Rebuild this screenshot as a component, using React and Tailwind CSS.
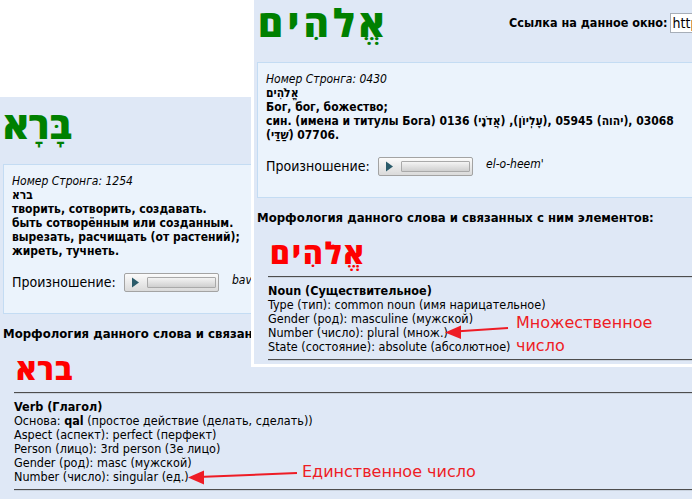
import React from "react";

const sans = { fontFamily: '"DejaVu Sans Condensed", "DejaVu Sans", sans-serif' };
const hebrew = { fontFamily: '"Open Sans", "DejaVu Sans", sans-serif' };

function Player() {
  return (
    <div className="flex items-center w-[95px] h-[19px] border border-[#a3a3a3] rounded-[2px] bg-gradient-to-b from-[#fbfbfb] to-[#dadada]">
      <svg width="22" height="17" viewBox="0 0 22 17" className="shrink-0">
        <path d="M7 3.5 L14 8.5 L7 13.5 Z" fill="#2b5b6a" />
      </svg>
      <div className="h-[11px] w-[69px] border border-[#a9a9a9] rounded-[1px] bg-gradient-to-b from-[#f4f4f4] to-[#cfcfcf]" />
    </div>
  );
}

function StrongBox({ children, translit }) {
  return (
    <div className="mx-[3px] border border-[#c4dcf3] bg-[#ebf3fc] px-[8px] pt-[9px] pb-[21px] text-[12px] leading-[14px] text-black">
      {children}
      <div className="mt-[14px] flex items-center h-[20px]">
        <span className="text-[14px] w-[112px] whitespace-nowrap">Произношение:</span>
        <Player />
        <span className="ml-[13px] italic text-[12px] -mt-[4px] whitespace-nowrap">{translit}</span>
      </div>
    </div>
  );
}

function Rule() {
  return <div className="h-[2px] border-t border-[#4d4d4d] border-b border-b-[#c9d2de]" />;
}

function Morph({ word, spacing, children }) {
  return (
    <>
      <div className="pl-[3px] pt-[12px] text-[13px] font-bold leading-[16px] whitespace-nowrap">
        Морфология данного слова и связанных с ним элементов:
      </div>
      <div className="ml-[14px] mt-[8px]">
        <div dir="rtl" className={"text-left pl-[2px] text-[30px] font-extrabold text-[#ff0000] leading-[38px] h-[38px] w-fit " + spacing} style={hebrew}>
          {word}
        </div>
        <div className="mt-[4px]">
          <Rule />
        </div>
        <div className="pt-[6px] pb-[5px] text-[12.5px] leading-[14px] whitespace-nowrap">{children}</div>
        <Rule />
      </div>
    </>
  );
}

export default function App() {
  return (
    <div className="relative w-[692px] h-[499px] overflow-hidden bg-white text-black" style={sans}>
      {/* back window: ברא */}
      <div className="absolute left-0 top-[97px] w-[900px] h-[420px] bg-[#dfe8f6]">
        <div className="h-[67px] pl-[3px] pt-[3px]">
          <div dir="rtl" className="w-fit text-[38px] font-extrabold text-[#008000] leading-[48px]" style={hebrew}>
            בָּרָא
          </div>
        </div>
        <div className="w-[400px]">
          <StrongBox translit="bav">
            <div className="italic">Номер Стронга: 1254</div>
            <div className="font-bold">
              <bdi>ברא</bdi>
            </div>
            <div className="font-bold">творить, сотворить, создавать.</div>
            <div className="font-bold">быть сотворённым или созданным.</div>
            <div className="font-bold">вырезать, расчищать (от растений);</div>
            <div className="font-bold">жиреть, тучнеть.</div>
          </StrongBox>
        </div>
        <Morph word="ברא" spacing="tracking-[1px]">
          <div className="font-bold">Verb (Глагол)</div>
          <div>
            Основа: <b>qal</b> (простое действие (делать, сделать))
          </div>
          <div>Aspect (аспект): perfect (перфект)</div>
          <div>Person (лицо): 3rd person (3е лицо)</div>
          <div>Gender (род): masc (мужской)</div>
          <div>Number (число): singular (ед.)</div>
        </Morph>
      </div>

      {/* front window: אלהים */}
      <div className="absolute left-[251px] top-[-3px] w-[620px] border-[3px] border-white bg-[#dfe8f6] pb-[3px]">
        <div className="h-[62px] flex items-start">
          <div className="w-[255px] shrink-0 pl-[4px] -mt-[2px]">
            <div dir="rtl" className="w-fit text-[38px] font-extrabold text-[#008000] leading-[48px] tracking-[4.5px]" style={hebrew}>
              אֱלֹהִים
            </div>
          </div>
          <div className="mt-[13px] flex items-center gap-[2px] whitespace-nowrap">
            <span className="text-[12.5px] font-bold">Ссылка на данное окно:</span>
            <input
              readOnly
              value="http://www.bible-center.ru/"
              className="w-[220px] h-[20px] px-[2px] bg-white border border-[#a7aeb8] text-[14px] outline-none"
              style={sans}
            />
          </div>
        </div>
        <StrongBox translit="el-o-heem'">
          <div className="italic">Номер Стронга: 0430</div>
          <div className="font-bold">
            <bdi>אֱלֹהִים</bdi>
          </div>
          <div className="font-bold">Бог, бог, божество;</div>
          <div className="font-bold whitespace-nowrap">
            син. (имена и титулы Бога) 0136 (<bdi>אֲדֹנָי</bdi>) ,(<bdi>עֶלְיוֹן</bdi>), 05945 (<bdi>יהוה</bdi>), 03068
          </div>
          <div className="font-bold">
            (<bdi>שַׁדַּי</bdi>) 07706.
          </div>
        </StrongBox>
        <Morph word="אֱלֹהִים" spacing="tracking-[2px]">
          <div className="font-bold">Noun (Существительное)</div>
          <div>Type (тип): common noun (имя нарицательное)</div>
          <div>Gender (род): masculine (мужской)</div>
          <div>Number (число): plural (множ.)</div>
          <div>State (состояние): absolute (абсолютное)</div>
        </Morph>
      </div>

      {/* annotations */}
      <div className="absolute left-[516px] top-[311px] text-[16px] leading-[23px] text-[#ee1c25]" style={{ fontFamily: '"DejaVu Sans", sans-serif' }}>
        <div>Множественное</div>
        <div>число</div>
      </div>
      <div className="absolute left-[302px] top-[460px] text-[16px] leading-[23px] text-[#ee1c25] whitespace-nowrap" style={{ fontFamily: '"DejaVu Sans", sans-serif' }}>
        Единственное число
      </div>
      <svg className="absolute left-0 top-0 pointer-events-none" width="692" height="499">
        <line x1="508" y1="328" x2="455" y2="331.5" stroke="#ee1c25" strokeWidth="2" />
        <path d="M445 332.5 L461 325.5 L461 339 Z" fill="#ee1c25" />
        <line x1="297" y1="473" x2="198" y2="477" stroke="#ee1c25" strokeWidth="2" />
        <path d="M188 477.5 L204 470.5 L204 484.5 Z" fill="#ee1c25" />
      </svg>
    </div>
  );
}
